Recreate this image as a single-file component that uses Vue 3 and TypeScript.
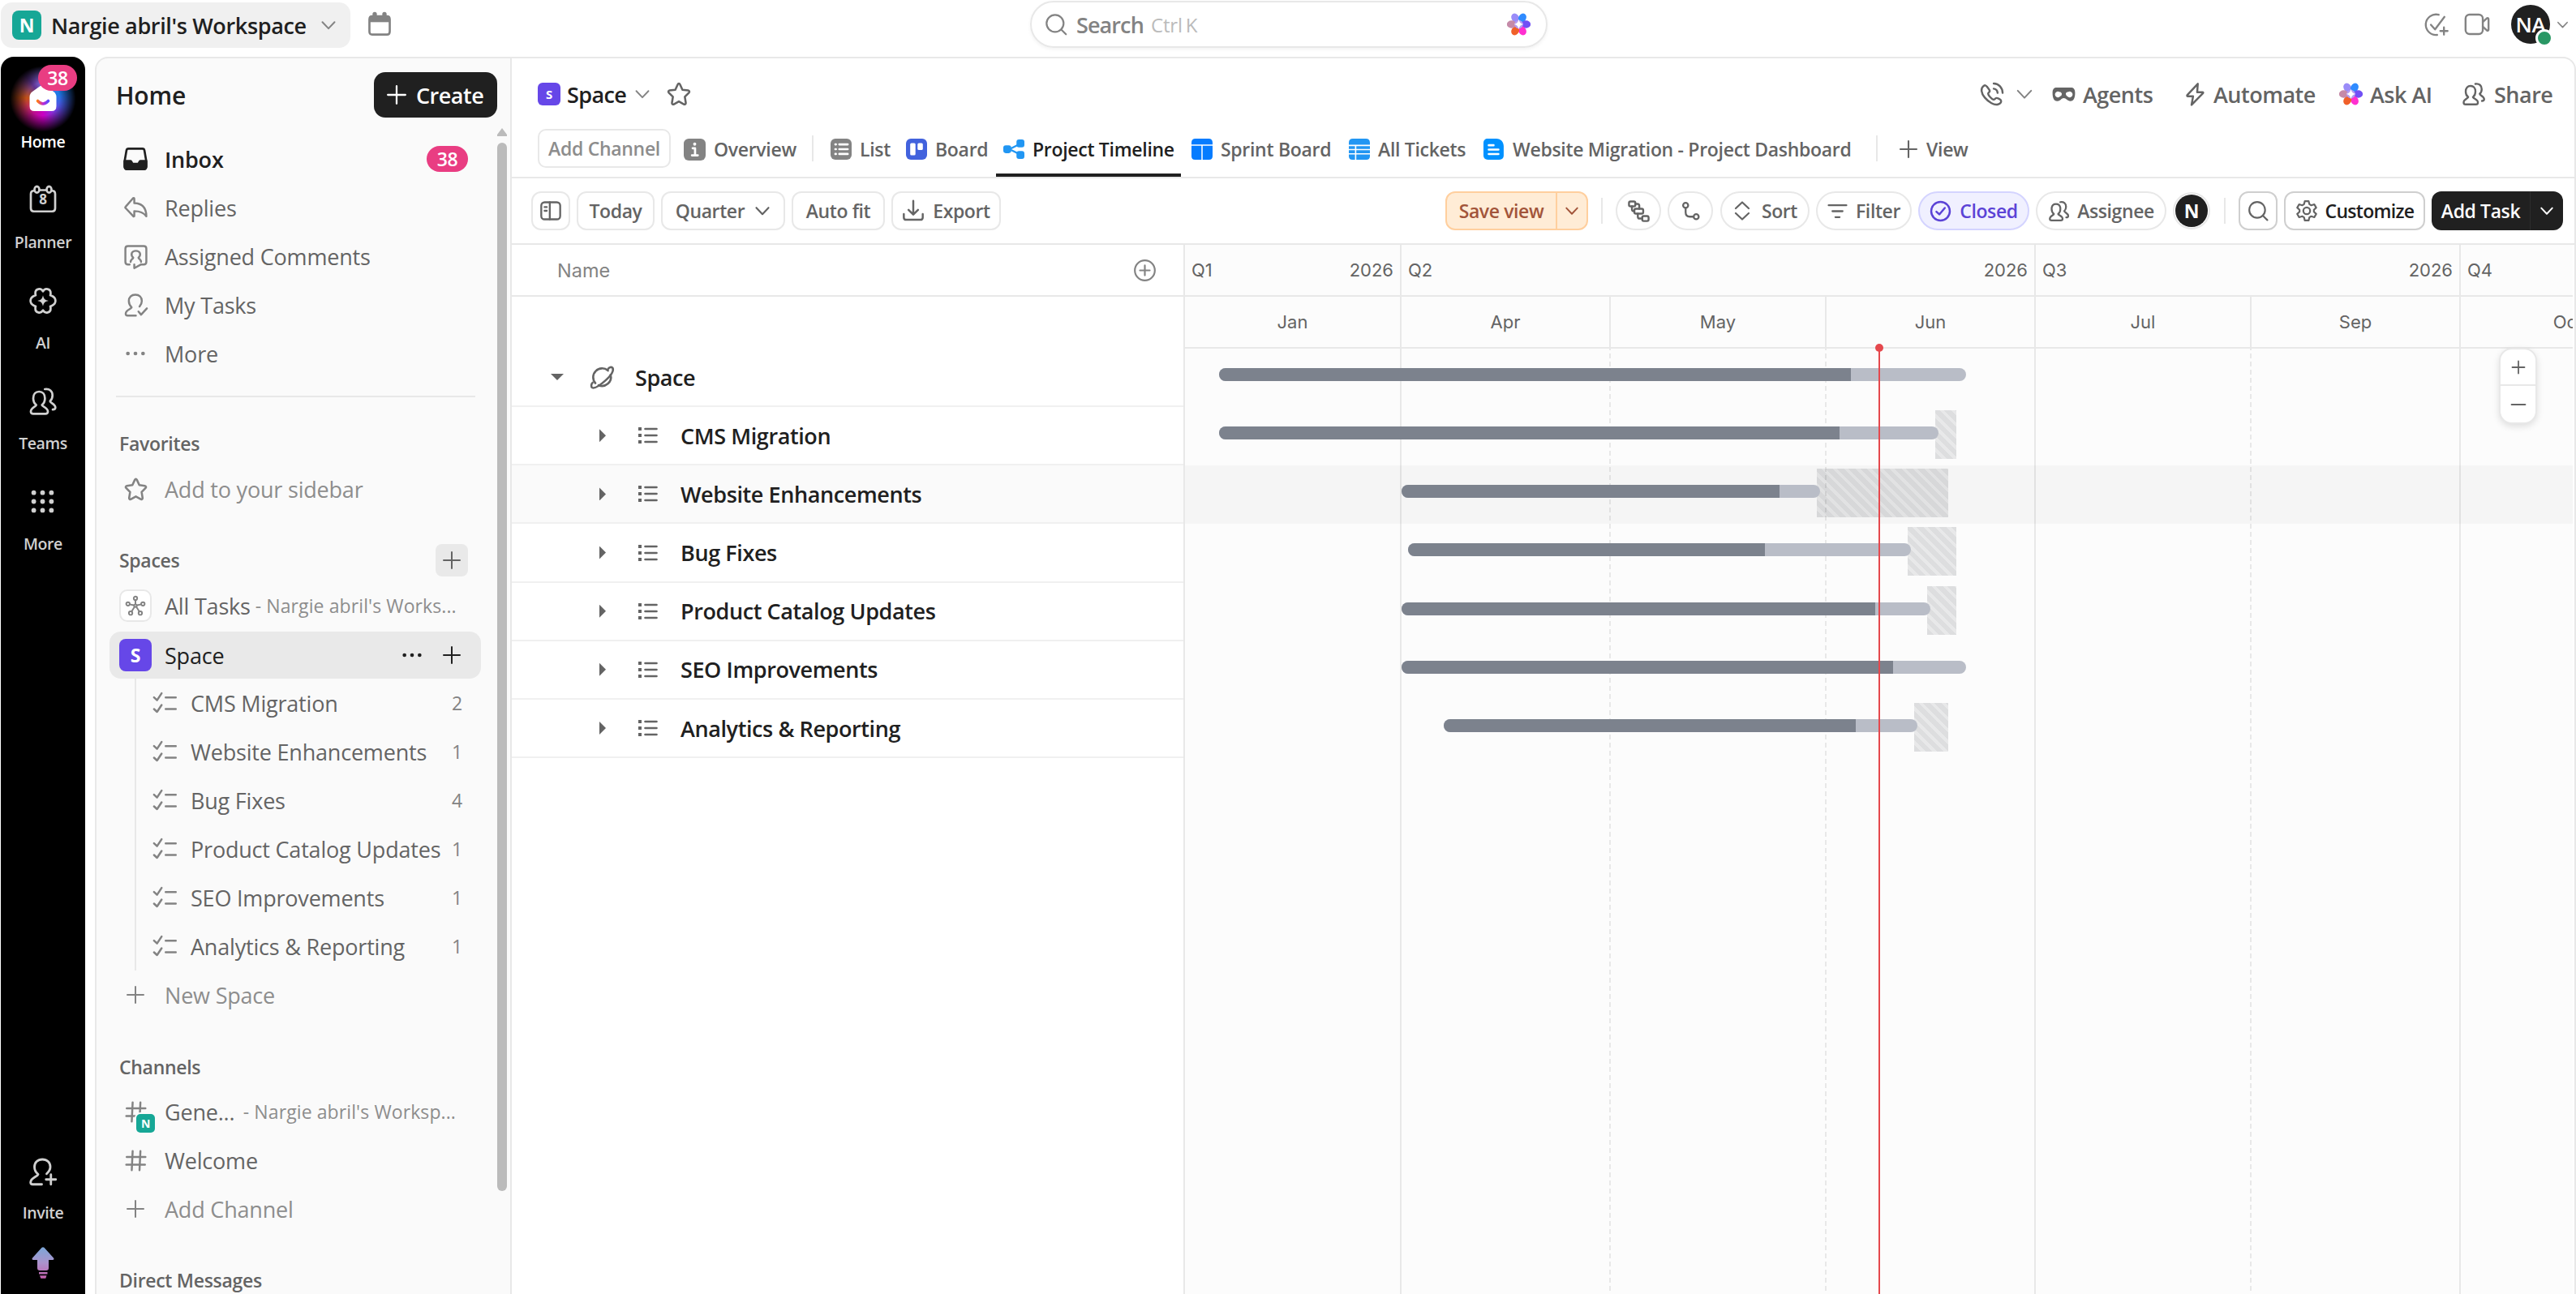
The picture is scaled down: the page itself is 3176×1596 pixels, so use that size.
<script setup lang="ts">
import { h, type FunctionalComponent } from 'vue'

const dot = (x: number, y: number, r: number) =>
  `<circle cx="${x}" cy="${y}" r="${r}" fill="currentColor" stroke="none"/>`

const icons: Record<string, string> = {
  chevron: '<path d="M3 7.5l9 9.5 9-9.5"/>',
  plus: '<path d="M12 2v20M2 12h20"/>',
  minus: '<path d="M2 12h20"/>',
  dots: dot(4, 12, 2) + dot(12, 12, 2) + dot(20, 12, 2),
  calendar:
    '<path d="M2.6 7.5c0-2 .8-3 2.6-3h13.600c1.800 0 2.600 1 2.600 3v11c0 2-.8 3-2.600 3H5.200c-1.800 0-2.600-1-2.600-3z"/><path d="M2.600 5h18.800v5H2.600z" fill="currentColor" stroke="none"/><path d="M7.500 2.500v4M16.500 2.500v4" stroke-width="4"/>',
  search: '<circle cx="11" cy="11" r="9"/><path d="M17.500 17.500l5 5"/>',
  taskAdd:
    '<path d="M14.500 2.500A9.800 9.800 0 1 0 13 21.700"/><path d="M7 12l4 4.500L20 4.500M19.500 14.500v7M16 18h7"/>',
  video:
    '<rect x="2" y="3.500" width="15" height="17" rx="3.500"/><path d="M17 10l3.500-3.200c.8-.5 1.500-.2 1.500.7v9c0 .9-.7 1.200-1.500.7L17 14"/>',
  planner:
    '<path d="M4.500 5.500c-1.600 0-2.500 1-2.500 2.600V20c0 1.500 1 2.500 2.500 2.500h15c1.500 0 2.500-1 2.500-2.500V8.100c0-1.600-.9-2.600-2.500-2.600"/><path d="M9.500 5h5"/><ellipse cx="7" cy="4.500" rx="2" ry="2.600"/><ellipse cx="17" cy="4.500" rx="2" ry="2.600"/>',
  ai:
    '<path d="M12 4.200c1.600-3 6.500-2.300 6.300 1.800-.1 1-.3 1.500-.3 1.500s.6.100 1.400.5c3.800 1.800 3.800 6.200 0 8-.8.400-1.400.5-1.400.5s.2.500.3 1.500c.2 4.100-4.700 4.800-6.300 1.800-1.600 3-6.500 2.300-6.300-1.800.1-1 .3-1.500.3-1.500s-.6-.1-1.400-.5c-3.800-1.800-3.800-6.200 0-8C5.400 7.600 6 7.500 6 7.500S5.800 7 5.700 6C5.500 1.900 10.400 1.200 12 4.200z"/><path d="M12 7.500c.7 3 1.500 3.800 4.500 4.500-3 .7-3.800 1.500-4.500 4.500-.7-3-1.500-3.800-4.500-4.500 3-.7 3.800-1.500 4.500-4.500z" fill="currentColor" stroke="none"/>',
  people:
    '<path d="M6.500 15c-2-1.500-2.500-3.500-2.500-5.500C4 6 6 4 8.800 4s4.800 2 4.800 5.500c0 2-.5 4-2.500 5.500 0 1.200 4.900 2.200 4.900 5.300 0 1.500-.8 1.900-2 1.900H4c-1.200 0-2-.4-2-1.900C2 17.200 6.500 16.200 6.500 15z"/><path d="M13.500 2c3.800-.6 6.300 1.500 6.300 5.200 0 2-.6 3.500-2 4.600 0 1.400 4.400 2.500 4.400 5.200 0 1.200-.8 1.800-2.200 1.800"/>',
  grid: [3, 12, 21].map((y) => [3, 12, 21].map((x) => dot(x, y, 2.400)).join('')).join(''),
  invite:
    '<path d="M11 22.500H3.500c-1.200 0-1.700-.5-1.700-1.600 0-4 5.700-4.600 6.200-6.700C6.200 12.800 5 10.500 5 8.200 5 4.500 7.700 2 11.500 2S18 4.500 18 8.200c0 2.300-1.200 4-3 5.600"/><path d="M18.500 14.500v8M14.500 18.500h8"/>',
  inbox:
    '<path d="M5.500 2.500h13c1 0 1.600.6 1.800 1.600L22 14v5c0 1.600-1 2.500-2.500 2.500h-15C3 21.500 2 20.600 2 19v-5L3.700 4.100c.2-1 .8-1.600 1.800-1.600z"/><path d="M2 14h5.500c1 0 1 2.500 2.500 2.500h4c1.500 0 1.500-2.500 2.500-2.500H22v5c0 1.600-1 2.500-2.500 2.500h-15C3 21.500 2 20.600 2 19z" fill="currentColor"/>',
  reply:
    '<path d="M10.500 3v4.300C17.500 7.500 22 11.500 22 20c-2.500-3.500-6-5-11.500-5v4.500c0 .6-.5.800-1 .4L2.300 12.200c-.5-.5-.5-1 0-1.500l7-8c.5-.5 1.200-.3 1.200.3z"/>',
  comment:
    '<path d="M6 19.500H4.500c-1.600 0-2.500-.9-2.500-2.500V4.500C2 2.900 2.900 2 4.500 2h15c1.600 0 2.500.9 2.500 2.500V17c0 1.600-.9 2.500-2.500 2.500H17L10.500 23v-3.500"/><path d="M9.500 13c-3-3-1.500-6.500 2.500-6.500s5.500 3.500 2.500 6.500c.5 1.500 2.500 1.800 2.500 4M9.500 13c-.5 1.500-2.500 1.800-2.500 4"/>',
  myTasks:
    '<path d="M12 21.800H4c-1.200 0-1.700-.6-1.700-1.700 0-3.600 4.900-4.200 5.700-6.100C6.500 12.600 5.300 10.500 5.300 8c0-3.600 2.400-6 6.200-6s6.200 2.400 6.200 6c0 2.300-.9 3.800-2.200 5.200"/><path d="M14.500 18l2.500 3 5.500-6"/>',
  star:
    '<path d="M12 2.200c.5 0 .8.300 1 .8l2.300 5 5.300.7c1.100.2 1.500 1.300.7 2.100L17.500 14.600l.9 5.500c.2 1.100-.9 1.800-1.800 1.300L12 18.800l-4.600 2.600c-.9.5-2-.2-1.800-1.300l.9-5.500-3.800-3.800c-.8-.8-.4-1.900.7-2.100l5.300-.7 2.300-5c.2-.5.5-.8 1-.8z"/>',
  network:
    '<circle cx="12" cy="12" r="1.500"/><circle cx="12" cy="3.600" r="2"/><circle cx="3.500" cy="10" r="2"/><circle cx="20.500" cy="10" r="2"/><circle cx="6.500" cy="20.500" r="2"/><circle cx="17.500" cy="20.500" r="2"/><path d="M12 5.600v4.600M5.500 10.500l4.700 1M18.500 10.500l-4.700 1M7.600 18.700l3.200-5M16.400 18.700l-3.200-5"/>',
  checklist: '<path d="M1.500 6.500l3 2.800L9 2.500M1.500 18l3 2.800L9 14M13 6.500h10M13 18h10"/>',
  hash: '<path d="M8.500 1.500l-1 21M17 1.500l-1 21M2 8h20.500M1.500 16.500H22"/>',
  phone:
    '<path d="M7.500 4.500c-.8-1.300-2-1.500-3.300-.5C1.500 6.200 1.700 10.500 5.500 15s9 7.500 12.500 6.500c2-.6 3.300-2 3-3.500-.2-1.100-3.500-2.800-4.500-2.600-1.200.2-1.500 1.800-2.800 1.500-1.700-.4-4.900-4-5-5.600 0-1.200 1.400-1.300 1.500-2.500.1-1-1.400-2.500-2.700-4.300z"/><path d="M14 1.500c4.800.2 8.300 3.800 8.500 9M14 6.500c2.200.3 3.500 1.800 3.700 4"/>',
  mask:
    '<path fill-rule="evenodd" fill="currentColor" stroke="none" d="M5 5h14c3 0 4.500 1.500 4.500 5.500 0 5-1.500 8.300-4.700 8.300-3.300 0-4.300-3-6.800-3s-3.500 3-6.800 3C2 18.800.5 15.500.5 10.500.5 6.500 2 5 5 5zM7.300 9.300a3 3 0 1 0 0 5.400 4 4 0 0 0 2.700-3.200c0-1.300-1.300-2.200-2.700-2.200zM16.700 9.300c-1.400 0-2.700.9-2.700 2.200a4 4 0 0 0 2.700 3.200 3 3 0 1 0 0-5.400z"/>',
  bolt: '<path d="M14.500 1.800L4.500 12.500c-.5.600-.3 1.200.5 1.200h5L8.500 22l10.800-11c.6-.6.400-1.200-.4-1.200h-5z"/>',
  panel:
    '<rect x="2" y="3" width="20" height="18" rx="3.500"/><path d="M11 3v18M5.500 8h2.300M5.500 12h2.300"/>',
  download: '<path d="M12 1.500v14M7 11l5 5 5-5M2 15.500v3.500c0 1.500.8 2.500 2.500 2.500h15c1.700 0 2.500-1 2.500-2.500v-3.500"/>',
  subtasks:
    '<rect x="2" y="2" width="6.500" height="5" rx="1.500"/><rect x="7.500" y="9.500" width="9" height="5" rx="1.500"/><rect x="15.500" y="17" width="6.500" height="5" rx="1.500"/><path d="M8.500 4.500h2c1.500 0 2 .7 2 2v3M5 7v3c0 1.300.7 2 2 2M11 14.500v3c0 1.300.7 2 2 2h2.500"/>',
  branch:
    '<circle cx="6" cy="5" r="3"/><circle cx="18.500" cy="18.500" r="3"/><path d="M6 8v5.500c0 3.300 1.700 5 5 5h4.500"/>',
  sort: '<path d="M4 9l8-7.500L20 9M4 15l8 7.500 8-7.500"/>',
  filter: '<path d="M1.500 5h21M6 12h12M9.500 19h5"/>',
  checkCircle: '<circle cx="12" cy="12" r="10.200"/><path d="M7.500 12.500l3.200 3 6-7"/>',
  gear:
    '<circle cx="12" cy="12" r="3.600"/><path d="M10 1.800h4l.8 3.200 2 1.200 3.200-1 2 3.500-2.400 2.200v2.200l2.400 2.200-2 3.500-3.200-1-2 1.200-.8 3.200h-4l-.8-3.200-2-1.200-3.200 1-2-3.500 2.400-2.200v-2.200L2 8.700l2-3.500 3.200 1 2-1.200z"/>',
  plusCircle: '<circle cx="12" cy="12" r="10.200"/><path d="M12 7v10M7 12h10"/>',
  planet:
    '<path d="M17.500 5.500A8.500 8.500 0 0 0 5.500 17.500M8.500 19.500A8.500 8.500 0 0 0 20 9.500"/><path d="M17.500 4c1-1.500 3.500-2.500 4.500-1 1.300 3-2.500 8-7 12s-9.500 8-12.500 6.800c-1.500-.8-1-3.800.3-4.800"/>',
  list:
    '<path d="M8.500 4h14M8.500 12h14M8.500 20h14"/><path d="M0 4h4M0 12h4M0 20h4" stroke-width="4" stroke-linecap="butt"/>',
  overviewTab:
    '<rect width="24" height="24" rx="5.500" fill="#838383" stroke="none"/><path d="M9.800 10.500h2.600V18M9 18.300h6.400" stroke="#fff" stroke-width="2.400"/><circle cx="12" cy="6" r="1.700" fill="#fff" stroke="none"/>',
  listTab:
    '<rect width="24" height="24" rx="5.500" fill="#838383" stroke="none"/><path d="M10 6.500h9.500M10 12h9.500M10 17.500h9.500M5.500 6.500h.6M5.500 12h.6M5.500 17.500h.6" stroke="#fff" stroke-width="2.500"/>',
  boardTab:
    '<rect width="24" height="24" rx="5.500" fill="#4262dd" stroke="none"/><rect x="4.800" y="5" width="6" height="14" rx="1.500" fill="#fff" stroke="none"/><rect x="13.200" y="5" width="6" height="8" rx="1.500" fill="#fff" stroke="none"/>',
  timelineTab:
    '<g fill="#2196f3" stroke="none"><rect x="0" y="7.500" width="9" height="9" rx="2.800"/><rect x="15" y="1" width="9" height="9" rx="2.800"/><rect x="15" y="14" width="9" height="9" rx="2.800"/></g><path d="M19 6L7 12l12 6" stroke="#2196f3" stroke-width="2.200"/>',
  sprintTab:
    '<path d="M4.500 0h15C22.300 0 24 1.700 24 4.500V6.800H0V4.500C0 1.700 1.700 0 4.500 0zM0 8h11.300v16H4c-2.500 0-4-1.500-4-4zM12.700 8H24v12c0 2.500-1.500 4-4 4h-7.300z" fill="#057cff" stroke="none"/>',
  tableTab:
    '<path d="M4.500 0h15C22.300 0 24 1.700 24 4.500V7H0V4.500C0 1.700 1.700 0 4.500 0zM0 8.500h7v3.300H0zM8.500 8.500H24v3.300H8.500zM0 13.200h7v3.300H0zM8.500 13.200H24v3.300H8.500zM0 18h7v6H4c-2.500 0-4-1.500-4-4zM8.500 18H24v2c0 2.500-1.500 4-4 4H8.500z" fill="#2196f3" stroke="none"/>',
  docTab:
    '<path d="M5 0h9.500C20 0 23 4 23 9v10c0 3.200-1.800 5-5 5H5c-3.200 0-5-1.800-5-5V5c0-3.200 1.800-5 5-5z" fill="#0091ff" stroke="none"/><path d="M6 7.500h5.500M6 12.500h11M6 17.500h11" stroke="#fff" stroke-width="2.400"/>',
}

interface IcoProps { name: string; size?: number; sw?: number }
const Ico: FunctionalComponent<IcoProps> = ({ name, size = 32, sw = 2 }) =>
  h('svg', {
    viewBox: '0 0 24 24', width: size, height: size, fill: 'none', stroke: 'currentColor',
    'stroke-width': sw, 'stroke-linecap': 'round', 'stroke-linejoin': 'round',
    preserveAspectRatio: 'none', overflow: 'visible', innerHTML: icons[name],
  })
Ico.props = ['name', 'size', 'sw']

const petals = [
  { x: 8.3, y: 5.2, a: -28, c: '#9a8cf8' },
  { x: 15.8, y: 5.2, a: 28, c: '#2f8bff' },
  { x: 19.6, y: 12, a: 90, c: '#7150f5' },
  { x: 15.8, y: 18.8, a: -28, c: '#ff2fd0' },
  { x: 8.3, y: 18.8, a: 28, c: '#f0602a' },
  { x: 4.4, y: 12, a: 90, c: '#c58aa8' },
]
const Flower: FunctionalComponent = () =>
  h('svg', { viewBox: '0 0 24 24', width: 29, height: 28, innerHTML:
    petals.map((p) => `<ellipse cx="${p.x}" cy="${p.y}" rx="4" ry="5" transform="rotate(${p.a} ${p.x} ${p.y})" fill="${p.c}"/>`).join('') +
    '<circle cx="12" cy="12" r="4.500" fill="#b49cf2"/><path d="M12 6.500c.8 3.700 1.800 4.700 5 5.500-3.200.8-4.200 1.800-5 5.500-.8-3.700-1.800-4.700-5-5.500 3.200-.8 4.200-1.800 5-5.500z" fill="#fff"/>' })

const rail = [
  { label: 'Planner', icon: 'planner' },
  { label: 'AI', icon: 'ai' },
  { label: 'Teams', icon: 'people' },
  { label: 'More', icon: 'grid' },
]
const nav = [
  { label: 'Replies', icon: 'reply' },
  { label: 'Assigned Comments', icon: 'comment' },
  { label: 'My Tasks', icon: 'myTasks' },
  { label: 'More', icon: 'dots' },
]
const lists = [
  { name: 'CMS Migration', count: 2 },
  { name: 'Website Enhancements', count: 1 },
  { name: 'Bug Fixes', count: 4 },
  { name: 'Product Catalog Updates', count: 1 },
  { name: 'SEO Improvements', count: 1 },
  { name: 'Analytics & Reporting', count: 1 },
]
const views = [
  { name: 'List', icon: 'listTab', w: 93 },
  { name: 'Board', icon: 'boardTab', w: 120 },
  { name: 'Project Timeline', icon: 'timelineTab', w: 232, active: true },
  { name: 'Sprint Board', icon: 'sprintTab', w: 194 },
  { name: 'All Tickets', icon: 'tableTab', w: 166 },
  { name: 'Website Migration - Project Dashboard', icon: 'docTab', w: 460 },
]
const quarters = [
  { q: 'Q1', year: '2026', w: 267 },
  { q: 'Q2', year: '2026', w: 782 },
  { q: 'Q3', year: '2026', w: 524 },
  { q: 'Q4', year: '', w: 524 },
]
const months = [
  { m: 'Jan', w: 267, end: true },
  { m: 'Apr', w: 258 },
  { m: 'May', w: 266 },
  { m: 'Jun', w: 258, end: true },
  { m: 'Jul', w: 266 },
  { m: 'Sep', w: 258, end: true },
  { m: 'Oct', w: 266 },
]
// Offsets are measured from the left edge of the chart body.
const bars = [
  { left: 42, done: 779, width: 921, buffer: null },
  { left: 42, done: 765, width: 887, buffer: [925, 26] },
  { left: 267, done: 466, width: 516, buffer: [779, 162], hover: true },
  { left: 275, done: 440, width: 620, buffer: [891, 60] },
  { left: 267, done: 584, width: 652, buffer: [915, 36] },
  { left: 267, done: 606, width: 696, buffer: null },
  { left: 319, done: 508, width: 584, buffer: [899, 42] },
]
const px = (n: number) => `${n}px`
</script>

<template>
  <div class="app">
    <header class="topbar">
      <div class="workspace">
        <span class="badge-n">N</span>
        <span class="ws-name">Nargie abril's Workspace</span>
        <Ico name="chevron" :size="20" :sw="2.4" class="c-gray" />
      </div>
      <Ico name="calendar" :size="32" class="c-gray cal" />
      <div class="search">
        <Ico name="search" :size="28" :sw="1.9" class="c-gray" />
        <span class="s-label">Search</span><span class="s-key">Ctrl<i></i>K</span>
        <Flower class="s-ai" />
      </div>
      <div class="top-right">
        <Ico name="taskAdd" :size="31" :sw="1.800" />
        <Ico name="video" :size="34" :sw="1.700" class="vid" />
        <span class="avatar">NA<i class="online"></i></span>
        <Ico name="chevron" :size="15" :sw="2.600" />
      </div>
    </header>

    <div class="body">
      <nav class="rail">
        <div class="rail-home">
          <span class="glow"></span>
          <svg class="house" width="34" height="34" viewBox="0 0 34 34">
            <defs><linearGradient id="smile"><stop offset="0" stop-color="#ff7a1a" /><stop offset=".5" stop-color="#c026d3" /><stop offset="1" stop-color="#5b4bff" /></linearGradient></defs>
            <path d="M13 2.500q4-3 8 0l9 6.500q3.500 2.500 3.500 6.500V27q0 6-6 6h-21q-6 0-6-6V15.500q0-4 3.500-6.500z" fill="#fff" />
            <path d="M10.500 20.500q6.500 7 13 0" fill="none" stroke="url(#smile)" stroke-width="3.600" stroke-linecap="round" />
          </svg>
          <span class="pink rail-badge">38</span>
        </div>
        <b class="rail-label on">Home</b>
        <div v-for="r in rail" :key="r.label" class="rail-item">
          <span class="rail-ico" :class="r.icon"><Ico :name="r.icon" :size="r.icon === 'grid' ? 29 : 36" :sw="1.800" /><em v-if="r.icon === 'planner'">8</em></span>
          <b class="rail-label">{{ r.label }}</b>
        </div>
        <div class="rail-item invite">
          <span class="rail-ico"><Ico name="invite" :size="36" :sw="1.900" /></span>
          <b class="rail-label">Invite</b>
        </div>
        <svg class="upgrade" width="28" height="40" viewBox="0 0 28 40">
          <defs><linearGradient id="up" x2="0" y2="1"><stop offset="0" stop-color="#7ba6d8" /><stop offset=".5" stop-color="#ab93cc" /><stop offset="1" stop-color="#c55fae" /></linearGradient></defs>
          <path d="M12.500.8q1.500-1.300 3 0L27 13.500q1.500 2.500-1.500 2.500H21v10q0 3-3 3h-8q-3 0-3-3V16H2.500Q-.5 16 1 13.500zM9 31h10.500v2.600H9zM10 35.200h8.500l-1.200 3.500h-6z" fill="url(#up)" />
        </svg>
      </nav>

      <aside class="side">
        <div class="side-head">
          <h1>Home</h1>
          <button class="create"><Ico name="plus" :size="26" :sw="2.100" />Create</button>
        </div>
        <div class="row inbox"><span class="slot"><Ico name="inbox" /></span>Inbox<span class="pink count">38</span></div>
        <div v-for="n in nav" :key="n.label" class="row"><span class="slot"><Ico :name="n.icon" :size="n.icon === 'dots' ? 28 : 31" :sw="1.900" /></span>{{ n.label }}</div>
        <div class="rule"></div>
        <div class="sect fav">Favorites</div>
        <div class="row muted"><span class="slot"><Ico name="star" :size="31" /></span>Add to your sidebar</div>
        <div class="sect spaces">Spaces<span class="sq-plus"><Ico name="plus" :size="24" /></span></div>
        <div class="row"><span class="slot boxed"><Ico name="network" :size="26" :sw="1.800" /></span>All Tasks<small class="t1">- Nargie abril's Works...</small></div>
        <div class="row current">
          <span class="slot purple">S</span>Space
          <span class="acts"><Ico name="dots" :size="28" /><Ico name="plus" :size="24" /></span>
        </div>
        <div class="tree">
          <div v-for="l in lists" :key="l.name" class="row leaf">
            <Ico name="checklist" :size="30" /><span>{{ l.name }}</span><span class="num">{{ l.count }}</span>
          </div>
        </div>
        <div class="row muted"><span class="slot"><Ico name="plus" :size="24" :sw="2" /></span>New Space</div>
        <div class="sect chan">Channels</div>
        <div class="row"><span class="slot gene"><Ico name="hash" :size="27" :sw="2.200" /><i>N</i></span>Gene...<small class="t2">- Nargie abril's Worksp...</small></div>
        <div class="row"><span class="slot"><Ico name="hash" :size="27" :sw="2.200" /></span>Welcome</div>
        <div class="row muted"><span class="slot"><Ico name="plus" :size="24" /></span>Add Channel</div>
        <div class="sect dm">Direct Messages</div>
        <div class="scroll"><i class="arrow"></i><i class="thumb"></i></div>
      </aside>

      <main class="main">
        <div class="crumbs">
          <span class="s-badge">S</span><b class="crumb">Space</b>
          <Ico name="chevron" :size="20" :sw="2.200" class="c-gray" />
          <Ico name="star" :size="32" :sw="1.900" class="cr-star" />
          <div class="actions">
            <Ico name="phone" :size="31" :sw="1.900" />
            <Ico name="chevron" :size="22" :sw="2.200" class="ph-chev" />
            <span class="act a1"><Ico name="mask" :size="29" />Agents</span>
            <span class="act a2"><Ico name="bolt" :size="31" :sw="1.900" />Automate</span>
            <span class="act a3"><Flower />Ask AI</span>
            <span class="act a4"><Ico name="people" :size="30" :sw="1.900" />Share</span>
          </div>
        </div>

        <div class="tabs">
          <span class="add-channel">Add Channel</span>
          <span class="tab overview"><Ico name="overviewTab" :size="27" />Overview</span>
          <i class="vr"></i>
          <span v-for="v in views" :key="v.name" class="tab" :class="{ active: v.active }" :style="{ width: px(v.w) }">
            <Ico :name="v.icon" :size="26" />{{ v.name }}
          </span>
          <i class="vr v2"></i>
          <span class="tab add-view"><Ico name="plus" :size="24" :sw="2.100" />View</span>
        </div>

        <div class="tools">
          <span class="btn b-panel"><Ico name="panel" :size="28" /></span>
          <span class="btn b-today">Today</span>
          <span class="btn b-quarter">Quarter<Ico name="chevron" :size="20" :sw="2.600" /></span>
          <span class="btn b-auto">Auto fit</span>
          <span class="btn b-export"><Ico name="download" :size="28" :sw="2.100" />Export</span>
          <span class="btn save"><span>Save view</span><i><Ico name="chevron" :size="18" :sw="2.600" /></i></span>
          <i class="vr v3"></i>
          <span class="btn pill p1"><Ico name="subtasks" :size="29" /></span>
          <span class="btn pill p2"><Ico name="branch" :size="25" :sw="2.200" /></span>
          <span class="btn pill p3"><Ico name="sort" :size="24" :sw="2.200" />Sort</span>
          <span class="btn pill p4"><Ico name="filter" :size="25" :sw="2.200" />Filter</span>
          <span class="btn pill closed"><Ico name="checkCircle" :size="27" :sw="2.200" />Closed</span>
          <span class="btn pill p5"><Ico name="people" :size="27" :sw="2" />Assignee</span>
          <span class="me">N</span>
          <i class="vr v4"></i>
          <span class="btn dark-line b-search"><Ico name="search" :size="26" /></span>
          <span class="btn dark-line b-cust"><Ico name="gear" :size="28" :sw="1.900" />Customize</span>
          <span class="add-task"><span>Add Task</span><i><Ico name="chevron" :size="18" :sw="2.600" /></i></span>
        </div>

        <div class="gantt">
          <section class="names">
            <div class="names-head"><span>Name</span><Ico name="plusCircle" :size="29" :sw="1.800" /></div>
            <div class="names-gap"></div>
            <div class="n-row root"><i class="caret down"></i><Ico name="planet" :size="31" :sw="2" /><b>Space</b></div>
            <div v-for="(l, i) in lists" :key="l.name" class="n-row" :class="{ hover: i === 1 }">
              <i class="caret"></i><Ico name="list" :size="24" :sw="2.600" /><b>{{ l.name }}</b>
            </div>
          </section>
          <section class="chart">
            <div class="scale"><div v-for="q in quarters" :key="q.q" class="q" :style="{ width: px(q.w) }"><span>{{ q.q }}</span><span>{{ q.year }}</span></div></div>
            <div class="scale"><div v-for="m in months" :key="m.m" class="m" :style="{ width: px(m.w) }">{{ m.m }}</div></div>
            <div class="plot">
              <div class="cols"><div v-for="m in months" :key="m.m" class="col" :class="{ solid: m.end }" :style="{ width: px(m.w) }"></div></div>
              <div v-for="(b, i) in bars" :key="i" class="lane" :class="{ hover: b.hover }">
                <i v-if="b.buffer" class="buffer" :style="{ left: px(b.buffer[0]), width: px(b.buffer[1]) }"></i>
                <div class="bar" :style="{ marginLeft: px(b.left), width: px(b.width) }"><i :style="{ width: px(b.done) }"></i></div>
              </div>
              <div class="today"></div>
              <div class="zoom"><span><Ico name="plus" :size="18" :sw="2.400" /></span><span><Ico name="minus" :size="20" :sw="2.600" /></span></div>
            </div>
          </section>
        </div>
      </main>
    </div>
  </div>
</template>

<style>
body { margin: 0; overflow: hidden; background: #fff; }
</style>

<style scoped>
* { box-sizing: border-box; }
.app {
  width: 3176px; height: 1596px; overflow: hidden; background: #fff; color: #202020;
  font-family: "Open Sans", "Noto Sans", sans-serif; font-size: 27px; letter-spacing: -0.2px;
  white-space: nowrap; display: flex; flex-direction: column;
}
svg { flex: none; display: block; }
i, em { font-style: normal; }
.c-gray { color: #838383; }

.topbar { height: 70px; flex: none; display: flex; align-items: center; padding: 0 9px 10px 1px; }
.workspace { width: 431px; height: 56px; margin-top: 2px; background: #f0f0f0; border-radius: 14px; display: flex; align-items: center; padding-left: 14px; }
.badge-n { width: 36px; height: 36px; border-radius: 8px; background: #16a796; color: #fff; font-weight: 700; font-size: 23px; display: flex; align-items: center; justify-content: center; }
.ws-name { font-weight: 600; width: 317px; margin: 0 15px 0 12px; letter-spacing: -.35px; }
.cal { margin-left: 20px; }
.search { width: 638px; height: 58px; margin-left: 786px; border: 2px solid #e8e8e8; border-radius: 29px; box-shadow: 0 2px 4px rgba(0,0,0,.05); display: flex; align-items: center; padding: 0 19px 0 16px; }
.s-label { color: #838383; font-weight: 600; margin-left: 11px; width: 92px; letter-spacing: -.9px; }
.s-key { color: #bbb; font-size: 24px; }
.s-key i { display: inline-block; width: 4px; }
.s-ai { margin-left: auto; }
.top-right { margin-left: auto; display: flex; align-items: center; color: #838383; }
.vid { margin-left: 18px; }
.avatar { position: relative; width: 48px; height: 48px; border-radius: 50%; background: #202020; color: #fff; font-weight: 600; font-size: 26px; display: flex; align-items: center; justify-content: center; margin: 0 8px 0 25px; }
.online { position: absolute; right: -4px; bottom: -4px; width: 22px; height: 22px; border-radius: 50%; background: #299764; border: 3px solid #fff; }

.body { flex: 1; min-height: 0; display: flex; }
.rail { width: 104px; margin-left: 1px; background: #000; border-radius: 16px 16px 0 0; display: flex; flex-direction: column; align-items: center; color: #d0d0d0; }
.rail-home { position: relative; width: 96px; height: 93px; flex: none; display: flex; justify-content: center; padding-top: 34px; }
.glow { position: absolute; left: 7px; top: 11px; width: 82px; height: 82px; border-radius: 50%; background: conic-gradient(#8f7dff, #1e86ff 20%, #5a5cff 32%, #e000d8 50%, #d0109a 60%, #d85a1a 76%, #6a3aa0 90%, #8f7dff); -webkit-mask: radial-gradient(circle, rgba(0,0,0,.9) 35%, transparent 70%); mask: radial-gradient(circle, rgba(0,0,0,.9) 35%, transparent 70%); }
.house { position: relative; }
.pink { background: #e93d82; color: #fff; border-radius: 16px; height: 32px; display: flex; align-items: center; justify-content: center; font-weight: 600; font-size: 23px; letter-spacing: -.5px; }
.rail-badge { position: absolute; left: 42px; top: 10px; width: 48px; }
.rail-label { font-size: 19.500px; font-weight: 600; line-height: 24px; letter-spacing: -.4px; }
.rail-label.on { color: #fff; margin-top: 0; }
.rail-item { height: 124px; display: flex; flex-direction: column; align-items: center; padding-top: 40px; flex: none; }
.rail-ico { position: relative; height: 66px; display: flex; align-items: flex-start; }
.rail-ico.ai, .rail-ico.people { padding-top: 2px; }
.rail-ico.grid { padding-top: 5px; }
.rail-ico em { position: absolute; left: 0; right: 0; top: 7px; text-align: center; font-size: 17px; font-weight: 700; }
.invite { margin-top: auto; height: 129px; padding-top: 18px; }
.invite .rail-ico { height: 57px; }
.upgrade { margin-bottom: 18px; flex: none; }

.side { position: relative; width: 514px; margin-left: 12px; flex: none; background: #fafafa; border: 2px solid #e8e8e8; border-width: 2px 2px 0 2px; border-radius: 16px 0 0 0; color: #646464; overflow: hidden; }
.side-head { height: 94px; display: flex; align-items: center; padding: 0 16px 3px 24px; justify-content: space-between; }
h1 { margin: 0; font-size: 30px; font-weight: 600; color: #202020; letter-spacing: -.2px; }
.create { width: 152px; height: 56px; margin-top: -1px; border: 0; border-radius: 14px; background: #202020; color: #fff; font: 600 27px "Open Sans", sans-serif; letter-spacing: -.5px; display: flex; align-items: center; padding: 0 0 0 15px; gap: 11px; }
.row { height: 60px; display: flex; align-items: center; padding-left: 28px; }
.slot { width: 40px; height: 40px; margin-right: 16px; display: flex; align-items: center; justify-content: center; color: #838383; flex: none; }
.inbox { color: #202020; font-weight: 600; }
.inbox .slot { color: #202020; }
.count { width: 51px; margin-left: auto; margin-right: 52px; }
.muted { color: #8d8d8d; }
.rule { height: 2px; background: #e8e8e8; margin: 22px 43px 0 24px; }
.sect { height: 36px; font-size: 23px; font-weight: 600; padding-left: 28px; display: flex; align-items: center; letter-spacing: -.3px; }
.fav { margin: 39px 0 8px; }
.spaces { margin: 38px 0 6px; padding-right: 52px; justify-content: space-between; height: 40px; }
.sq-plus { width: 40px; height: 40px; border-radius: 8px; background: #e9e9e9; display: flex; align-items: center; justify-content: center; }
.boxed { background: #fff; border: 2px solid #e8e8e8; border-radius: 10px; }
.row small { font-size: 23px; color: #8d8d8d; letter-spacing: .1px; }
.t1 { margin-left: 6px; }
.t2 { margin-left: auto; margin-right: 67px; }
.current { margin: 2px 36px 0 16px; height: 58px; background: #e9e9e9; border-radius: 14px; padding-left: 12px; color: #202020; }
.purple { background: #6647e8; color: #fff; border-radius: 8px; font-size: 23px; font-weight: 700; }
.acts { margin-left: auto; display: flex; align-items: center; gap: 23px; margin-right: 24px; }
.tree { margin-left: 47px; border-left: 2px solid #e8e8e8; height: 360px; }
.leaf { padding-left: 20px; }
.leaf svg { color: #838383; margin-right: 17px; }
.num { font-size: 23px; color: #838383; margin-left: auto; margin-right: 59px; }
.chan { margin: 41px 0 7px; }
.gene { position: relative; }
.gene i { position: absolute; right: -4px; bottom: -6px; width: 23px; height: 23px; border-radius: 5px; background: #16a796; box-shadow: 0 0 0 2px #fafafa; color: #fff; font-size: 14px; font-weight: 700; display: flex; align-items: center; justify-content: center; }
.dm { margin-top: 40px; }
.scroll { position: absolute; left: 494px; top: 86px; width: 12px; display: flex; flex-direction: column; gap: 8px; }
.arrow { height: 10px; background: #bbb; clip-path: polygon(50% 0, 100% 80%, 100% 100%, 0 100%, 0 80%); }
.thumb { height: 1293px; background: #bbb; border-radius: 6px; }

.main { flex: 1; min-width: 0; border-top: 2px solid #e8e8e8; border-right: 2px solid #e8e8e8; border-top-right-radius: 16px; display: flex; flex-direction: column; }
.crumbs { height: 88px; display: flex; align-items: center; padding: 0 29px 0 32px; flex: none; }
.s-badge { width: 28px; height: 28px; border-radius: 6px; background: #6647e8; color: #fff; font-weight: 700; font-size: 15px; display: flex; align-items: center; justify-content: center; }
.crumb { font-weight: 600; margin: 0 8px 0 8px; width: 75px; letter-spacing: -.6px; }
.cr-star { margin-left: 19px; color: #646464; }
.actions { margin-left: auto; display: flex; align-items: center; color: #646464; }
.ph-chev { margin-left: 14px; color: #838383; }
.act { display: flex; align-items: center; font-weight: 600; gap: 9px; letter-spacing: -.5px; }
.a1 { margin-left: 23px; width: 161px; }
.a2 { width: 193px; gap: 7px; }
.a3 { width: 151px; }
.a4 { width: 110px; gap: 10px; }

.tabs { height: 60px; border-bottom: 2px solid #e8e8e8; display: flex; align-items: flex-start; padding-left: 32px; flex: none; font-size: 23px; font-weight: 600; color: #646464; letter-spacing: -.3px; }
.add-channel { width: 164px; height: 48px; border: 2px solid #e8e8e8; border-radius: 10px; color: #8d8d8d; display: flex; align-items: center; justify-content: center; margin-top: -1px; }
.tab { height: 60px; display: flex; align-items: center; gap: 10px; padding-bottom: 12px; flex: none; }
.overview { width: 174px; padding-left: 16px; }
.vr { width: 2px; height: 32px; margin: 7px 21px 0 0; background: #e8e8e8; flex: none; }
.active { color: #202020; position: relative; }
.active::after { content: ''; position: absolute; left: -9px; top: 54px; width: 228px; height: 4px; background: #202020; }
.v2 { margin: 7px 26px 0 24px; }

.tools { height: 80px; flex: none; display: flex; align-items: center; padding: 0 14px 0 24px; font-size: 23px; font-weight: 600; color: #646464; letter-spacing: -.4px; }
.btn { height: 48px; border: 2px solid #e8e8e8; border-radius: 12px; display: flex; align-items: center; justify-content: center; flex: none; }
.b-panel { width: 48px; margin-right: 8px; }
.b-today { width: 96px; margin-right: 8px; }
.b-quarter { width: 153px; margin-right: 8px; gap: 12px; }
.b-auto { width: 115px; margin-right: 8px; }
.b-export { width: 135px; gap: 10px; }
.save { width: 176px; margin-left: auto; background: #ffecd6; border-color: #ffcf9e; color: #a2543a; justify-content: stretch; }
.save span { flex: 1; text-align: center; }
.save i { width: 38px; height: 44px; border-left: 2px solid #ffcf9e; display: flex; align-items: center; justify-content: center; }
.v3 { margin: 0 16px; }
.pill { border-radius: 24px; margin-right: 8px; gap: 12px; }
.p1, .p2 { width: 56px; }
.p3 { width: 110px; margin-left: 1px; }
.p4 { width: 118px; gap: 10px; }
.p5 { width: 161px; gap: 9px; }
.closed { width: 137px; background: #f0f0ff; border-color: #d4d4ff; color: #5b43d6; gap: 10px; }
.me { width: 46px; height: 46px; border-radius: 50%; border: 2px solid #e8e8e8; padding: 1px; background: #202020; background-clip: content-box; color: #fff; font-weight: 700; display: flex; align-items: center; justify-content: center; }
.v4 { margin: 0 16px 0 17px; }
.dark-line { border-color: #cfcfcf; margin-right: 8px; }
.b-search { width: 48px; }
.b-cust { width: 174px; color: #202020; gap: 9px; letter-spacing: -.7px; }
.b-cust svg { color: #646464; }
.add-task { width: 162px; height: 48px; border-radius: 12px; background: #202020; color: #fff; display: flex; align-items: center; }
.add-task span { width: 122px; text-align: center; border-right: 1px solid #2c2c2c; line-height: 48px; }
.add-task i { flex: 1; display: flex; justify-content: center; }

.gantt { flex: 1; min-height: 0; display: flex; border-top: 2px solid #e8e8e8; }
.names { width: 828px; flex: none; }
.names-head { height: 64px; border-bottom: 2px solid #e8e8e8; display: flex; align-items: center; justify-content: space-between; padding: 0 33px 0 56px; color: #838383; font-family: Inter, sans-serif; font-size: 23.500px; letter-spacing: 0; }
.names-gap { height: 64px; }
.n-row { height: 72.170px; border-bottom: 2px solid #f0f0f0; display: flex; align-items: center; padding-left: 108px; color: #646464; }
.n-row.hover { background: #fafafa; }
.n-row svg { margin: 0 28px 0 40px; }
.n-row b { color: #202020; font-weight: 600; letter-spacing: -.4px; }
.caret { width: 8px; height: 16px; background: #646464; clip-path: polygon(0 0, 100% 50%, 0 100%); }
.root { padding-left: 48px; }
.root svg { margin: 0 25px 0 32px; }
.caret.down { width: 16px; height: 8px; clip-path: polygon(0 0, 100% 0, 50% 100%); }

.chart { flex: 1; min-width: 0; overflow: hidden; background: #fcfcfc; border-left: 2px solid #e8e8e8; margin-right: 2px; display: flex; flex-direction: column; font-family: Inter, sans-serif; color: #646464; font-size: 22px; letter-spacing: 0; }
.scale { display: flex; height: 64px; flex: none; border-bottom: 2px solid #e8e8e8; }
.q, .m { flex: none; border-right: 2px solid #e8e8e8; display: flex; align-items: center; }
.q { justify-content: space-between; padding: 0 8px; }
.m { justify-content: center; }
.plot { position: relative; flex: 1; }
.cols { position: absolute; inset: 0; display: flex; }
.col { flex: none; background: repeating-linear-gradient(#e8e8e8 0 6px, transparent 6px 10px) right -4px / 2px 1300px no-repeat; }
.col.solid { background: linear-gradient(#e8e8e8, #e8e8e8) right / 2px 100% no-repeat; }
.lane { position: relative; height: 72.170px; padding-top: 24px; }
.lane.hover { background: rgba(0,0,0,.028); }
.bar { position: relative; height: 16px; border-radius: 8px; background: #b9bdc7; overflow: hidden; }
.bar i { display: block; height: 16px; background: #7c828d; }
.buffer { position: absolute; top: 4px; height: 60px; background: repeating-linear-gradient(45deg, rgba(20,25,35,.135) 0 6px, rgba(20,25,35,.085) 6px 10px); }
.today { position: absolute; left: 855px; top: 0; bottom: 0; width: 2px; background: #e5484d; }
.today::before { content: ''; position: absolute; left: -4px; top: -6px; width: 10px; height: 10px; border-radius: 50%; background: #e5484d; }
.zoom { position: absolute; left: 1620px; top: -1px; width: 47px; height: 94px; background: #fff; border: 2px solid #e8e8e8; border-radius: 16px; box-shadow: 0 3px 8px rgba(0,0,0,.12); }
.zoom span { height: 43px; display: flex; align-items: center; justify-content: center; }
.zoom span + span { border-top: 2px solid #e8e8e8; height: 47px; }
</style>
